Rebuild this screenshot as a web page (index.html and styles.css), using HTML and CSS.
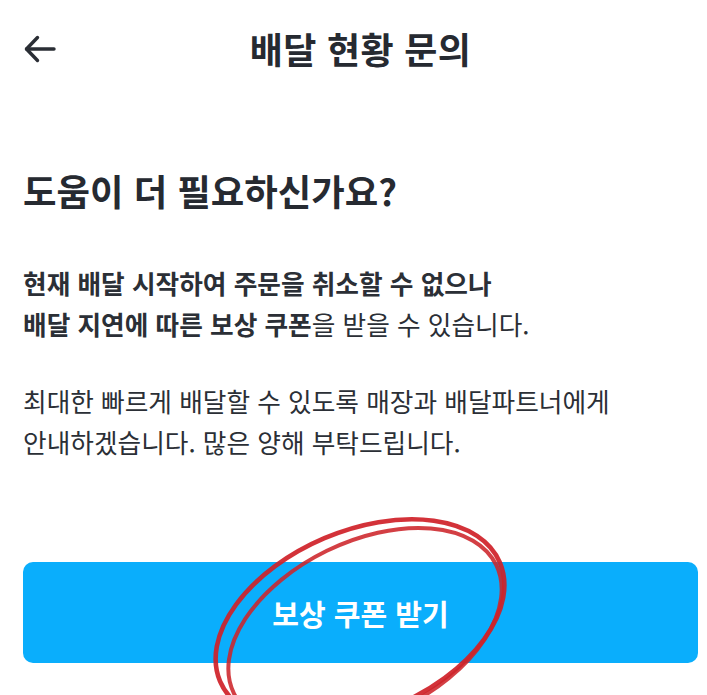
FILE: index.html
```html
<!DOCTYPE html>
<html lang="ko">
<head>
<meta charset="utf-8">
<title>배달 현황 문의</title>
<link rel="stylesheet" href="styles.css">
</head>
<body>
<div class="page">
  <header class="topbar">
    <button class="back" aria-label="뒤로">
      <svg width="34" height="30" viewBox="0 0 34 30" fill="none" stroke="#2a2e35" stroke-width="3.4" stroke-linecap="round" stroke-linejoin="round">
        <path d="M31 15H3.5"/>
        <path d="M14.5 3.5L3.5 15L14.5 26.5"/>
      </svg>
    </button>
    <h1 class="title">배달 현황 문의</h1>
    <span class="spacer"></span>
  </header>
  <main class="content">
    <h2 class="heading">도움이 더 필요하신가요?</h2>
    <p class="para strong">현재 배달 시작하여 주문을 취소할 수 없으나<br>배달 지연에 따른 보상 쿠폰<span class="normal">을 받을 수 있습니다.</span></p>
    <p class="para">최대한 빠르게 배달할 수 있도록 매장과 배달파트너에게<br>안내하겠습니다. 많은 양해 부탁드립니다.</p>
    <button class="cta">보상 쿠폰 받기</button>
  </main>
  <svg class="mark" width="707" height="695" viewBox="0 0 707 695" fill="none">
    <ellipse cx="360" cy="622" rx="152" ry="91" transform="rotate(-23 360 622)" stroke="#cf2128" stroke-width="4.6" opacity="0.92"/>
    <ellipse cx="365" cy="629" rx="146" ry="87" transform="rotate(-26 365 629)" stroke="#cd242a" stroke-width="4" opacity="0.88"/>
  </svg>
</div>
</body>
</html>
```

FILE: styles.css
```css
* { box-sizing: border-box; }
html, body {
  margin: 0;
  padding: 0;
  background: #ffffff;
}
body {
  font-family: "Noto Sans CJK KR", "Noto Sans", sans-serif;
  color: #2a2e35;
  width: 707px;
  height: 695px;
  overflow: hidden;
}
.page {
  position: relative;
  width: 707px;
  height: 695px;
  padding: 0 9px 0 23px;
}
.topbar {
  height: 96px;
  display: grid;
  grid-template-columns: 40px 1fr 40px;
  align-items: center;
}
.back {
  border: 0;
  background: none;
  padding: 0;
  margin: 0;
  width: 34px;
  height: 30px;
  display: flex;
  margin-top: 1px;
}
.title {
  margin: 0;
  text-align: center;
  font-size: 36px;
  font-weight: 700;
  line-height: 44px;
  letter-spacing: 0.3px;
  color: #262a31;
}
.content {
  display: flex;
  flex-direction: column;
  align-items: stretch;
}
.heading {
  margin: 71px 0 0;
  font-size: 36.4px;
  font-weight: 700;
  line-height: 46px;
  color: #262a31;
}
.para {
  margin: 0;
  font-size: 25.7px;
  line-height: 41px;
  font-weight: 400;
  color: #2b2f36;
}
.strong {
  margin-top: 49px;
  font-weight: 700;
}
.normal { font-weight: 400; }
.para + .para { margin-top: 36px; }
.cta {
  margin-top: 100px;
  height: 101px;
  border: 0;
  border-radius: 10px;
  background: #0aaefc;
  color: #ffffff;
  font-family: inherit;
  font-size: 29px;
  font-weight: 700;
  letter-spacing: 0;
}
.mark {
  position: absolute;
  top: 0;
  left: 0;
  pointer-events: none;
}
```
